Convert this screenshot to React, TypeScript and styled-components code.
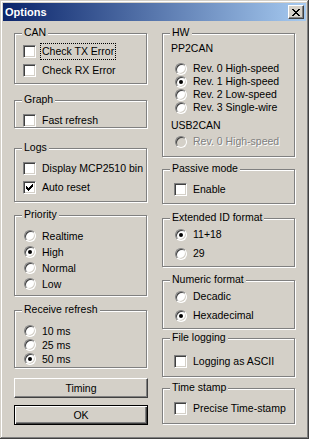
import React from "react";
import styled, { createGlobalStyle, css } from "styled-components";

const GlobalStyle = createGlobalStyle`
  html, body { margin: 0; padding: 0; background: #d4d0c8; }
  body { font-family: "Liberation Sans", Arial, sans-serif; font-size: 10.5px; color: #000; }
`;

const Window = styled.div`
  width: 309px;
  height: 439px;
  box-sizing: border-box;
  padding: 3px;
  background: #d4d0c8;
  box-shadow: inset -1px -1px #404040, inset 1px 1px #d4d0c8,
    inset -2px -2px #808080, inset 2px 2px #fff;
  display: flex;
  flex-direction: column;
`;

const TitleBar = styled.div`
  height: 18px;
  flex-shrink: 0;
  display: flex;
  align-items: center;
  justify-content: space-between;
  padding: 0 2px;
  background: linear-gradient(to right, #0a246a, #a6caf0);
  color: #fff;
  font-weight: bold;
  font-size: 11px;
`;

const CloseButton = styled.div`
  width: 16px;
  height: 14px;
  box-sizing: border-box;
  background: #d4d0c8;
  border: 1px solid;
  border-color: #fff #404040 #404040 #fff;
  box-shadow: inset -1px -1px #808080;
  display: flex;
  align-items: center;
  justify-content: center;
`;

const Columns = styled.div`
  display: flex;
  gap: 14px;
  padding-left: 11px;
`;

const Column = styled.div`
  width: 134px;
  display: flex;
  flex-direction: column;
`;

const Group = styled.div<{ $mt: number; $h: number; $pt: number }>`
  position: relative;
  box-sizing: border-box;
  width: 133px;
  height: ${(p) => p.$h}px;
  margin-top: ${(p) => p.$mt}px;
  padding-top: ${(p) => p.$pt}px;
  border: 1px solid #808080;
  box-shadow: inset 1px 1px #fff, 1px 1px #fff;
`;

const Legend = styled.span`
  position: absolute;
  top: -8px;
  left: 7px;
  padding: 0 2px;
  line-height: 13px;
  background: #d4d0c8;
`;

const Row = styled.div<{ $h: number; $pl: number; $mt?: number }>`
  display: flex;
  align-items: center;
  gap: 6px;
  height: ${(p) => p.$h}px;
  padding-left: ${(p) => p.$pl}px;
  margin-top: ${(p) => p.$mt ?? 0}px;
`;

const StaticText = styled.div<{ $pl: number; $mt?: number }>`
  line-height: 13px;
  padding-left: ${(p) => p.$pl}px;
  margin-top: ${(p) => p.$mt ?? 0}px;
`;

const Slot = styled.span`
  width: 13px;
  height: 13px;
  flex-shrink: 0;
  display: flex;
  align-items: center;
  justify-content: center;
`;

const CheckBox = styled.span`
  width: 13px;
  height: 13px;
  box-sizing: border-box;
  background: #fff;
  border: 1px solid;
  border-color: #808080 #fff #fff #808080;
  box-shadow: inset 1px 1px #404040, inset -1px -1px #d4d0c8;
  display: flex;
  align-items: center;
  justify-content: center;
`;

const RadioCircle = styled.span<{ $disabled?: boolean }>`
  width: 12px;
  height: 12px;
  box-sizing: border-box;
  border-radius: 50%;
  background: ${(p) => (p.$disabled ? "#d4d0c8" : "#fff")};
  border: 1px solid;
  border-color: #808080 #fff #fff #808080;
  box-shadow: inset 1px 1px #404040, inset -1px -1px #d4d0c8;
  display: flex;
  align-items: center;
  justify-content: center;
`;

const Dot = styled.span`
  width: 4px;
  height: 4px;
  border-radius: 50%;
  background: #000;
`;

const Caption = styled.span<{ $focus?: boolean; $disabled?: boolean }>`
  line-height: 13px;
  white-space: nowrap;
  ${(p) =>
    p.$focus &&
    css`
      padding: 1px;
      margin: -1px;
      outline: 1px dotted #000;
    `}
  ${(p) =>
    p.$disabled &&
    css`
      color: #808080;
      text-shadow: 1px 1px #fff;
    `}
`;

const Button = styled.button<{ $mt: number; $default?: boolean }>`
  width: 134px;
  height: 20px;
  margin-top: ${(p) => p.$mt}px;
  padding: 0;
  box-sizing: border-box;
  font: inherit;
  color: #000;
  background: #d4d0c8;
  ${(p) =>
    p.$default
      ? css`
          border: 1px solid #000;
          box-shadow: inset 1px 1px #fff, inset -1px -1px #404040,
            inset -2px -2px #808080;
        `
      : css`
          border: 1px solid;
          border-color: #fff #404040 #404040 #fff;
          box-shadow: inset -1px -1px #808080;
        `}
`;

const CheckMark = () => (
  <svg width="7" height="7" viewBox="0 0 7 7" shapeRendering="crispEdges">
    <path d="M6 0h1v3h-1v1h-1v1h-1v1h-1v1h-1v-1h-1v-1h-1v-3h1v1h1v1h1v-1h1v-1h1z" fill="#000" />
  </svg>
);

const Check: React.FC<{ label: string; checked?: boolean; focus?: boolean; h: number; pl: number }> = ({
  label,
  checked,
  focus,
  h,
  pl,
}) => (
  <Row $h={h} $pl={pl}>
    <Slot>
      <CheckBox>{checked && <CheckMark />}</CheckBox>
    </Slot>
    <Caption $focus={focus}>{label}</Caption>
  </Row>
);

const Radio: React.FC<{ label: string; checked?: boolean; disabled?: boolean; h: number; pl: number; mt?: number }> = ({
  label,
  checked,
  disabled,
  h,
  pl,
  mt,
}) => (
  <Row $h={h} $pl={pl} $mt={mt}>
    <Slot>
      <RadioCircle $disabled={disabled}>{checked && <Dot />}</RadioCircle>
    </Slot>
    <Caption $disabled={disabled}>{label}</Caption>
  </Row>
);

export default function App() {
  return (
    <>
      <GlobalStyle />
      <Window>
        <TitleBar>
          <span>Options</span>
          <CloseButton>
            <svg width="8" height="7" viewBox="0 0 8 7" shapeRendering="crispEdges">
              <path
                d="M0 0h2v1h1v1h2v-1h1v-1h2v1h-1v1h-1v1h-1v1h1v1h1v1h1v1h-2v-1h-1v-1h-2v1h-1v1h-2v-1h1v-1h1v-1h1v-1h-1v-1h-1v-1h-1z"
                fill="#000"
              />
            </svg>
          </CloseButton>
        </TitleBar>
        <Columns>
          <Column>
            <Group $mt={12} $h={51} $pt={8}>
              <Legend>CAN</Legend>
              <Check label="Check TX Error" focus h={19} pl={8} />
              <Check label="Check RX Error" h={19} pl={8} />
            </Group>
            <Group $mt={16} $h={28} $pt={11}>
              <Legend>Graph</Legend>
              <Check label="Fast refresh" h={16} pl={8} />
            </Group>
            <Group $mt={20} $h={54} $pt={10}>
              <Legend>Logs</Legend>
              <Check label="Display MCP2510 bin" h={19} pl={8} />
              <Check label="Auto reset" checked h={19} pl={8} />
            </Group>
            <Group $mt={13} $h={81} $pt={12}>
              <Legend>Priority</Legend>
              <Radio label="Realtime" h={16} pl={8} />
              <Radio label="High" checked h={16} pl={8} />
              <Radio label="Normal" h={16} pl={8} />
              <Radio label="Low" h={16} pl={8} />
            </Group>
            <Group $mt={14} $h={58} $pt={13}>
              <Legend>Receive refresh</Legend>
              <Radio label="10 ms" h={14} pl={8} />
              <Radio label="25 ms" h={14} pl={8} />
              <Radio label="50 ms" checked h={14} pl={8} />
            </Group>
            <Button $mt={10}>Timing</Button>
            <Button $mt={7} $default>
              OK
            </Button>
          </Column>
          <Column>
            <Group $mt={12} $h={124} $pt={8}>
              <Legend>HW</Legend>
              <StaticText $pl={8}>PP2CAN</StaticText>
              <Radio label="Rev. 0 High-speed" h={13} pl={11} mt={7} />
              <Radio label="Rev. 1 High-speed" checked h={13} pl={11} />
              <Radio label="Rev. 2 Low-speed" h={13} pl={11} />
              <Radio label="Rev. 3 Single-wire" h={13} pl={11} />
              <StaticText $pl={8} $mt={5}>
                USB2CAN
              </StaticText>
              <Radio label="Rev. 0 High-speed" disabled h={13} pl={11} mt={3} />
            </Group>
            <Group $mt={12} $h={35} $pt={10}>
              <Legend>Passive mode</Legend>
              <Check label="Enable" h={19} pl={11} />
            </Group>
            <Group $mt={14} $h={49} $pt={6}>
              <Legend>Extended ID format</Legend>
              <Radio label="11+18" checked h={19} pl={11} />
              <Radio label="29" h={19} pl={11} />
            </Group>
            <Group $mt={13} $h={49} $pt={6}>
              <Legend>Numeric format</Legend>
              <Radio label="Decadic" h={19} pl={11} />
              <Radio label="Hexadecimal" checked h={19} pl={11} />
            </Group>
            <Group $mt={9} $h={39} $pt={13}>
              <Legend>File logging</Legend>
              <Check label="Logging as ASCII" h={19} pl={11} />
            </Group>
            <Group $mt={11} $h={36} $pt={10}>
              <Legend>Time stamp</Legend>
              <Check label="Precise Time-stamp" h={19} pl={11} />
            </Group>
          </Column>
        </Columns>
      </Window>
    </>
  );
}
